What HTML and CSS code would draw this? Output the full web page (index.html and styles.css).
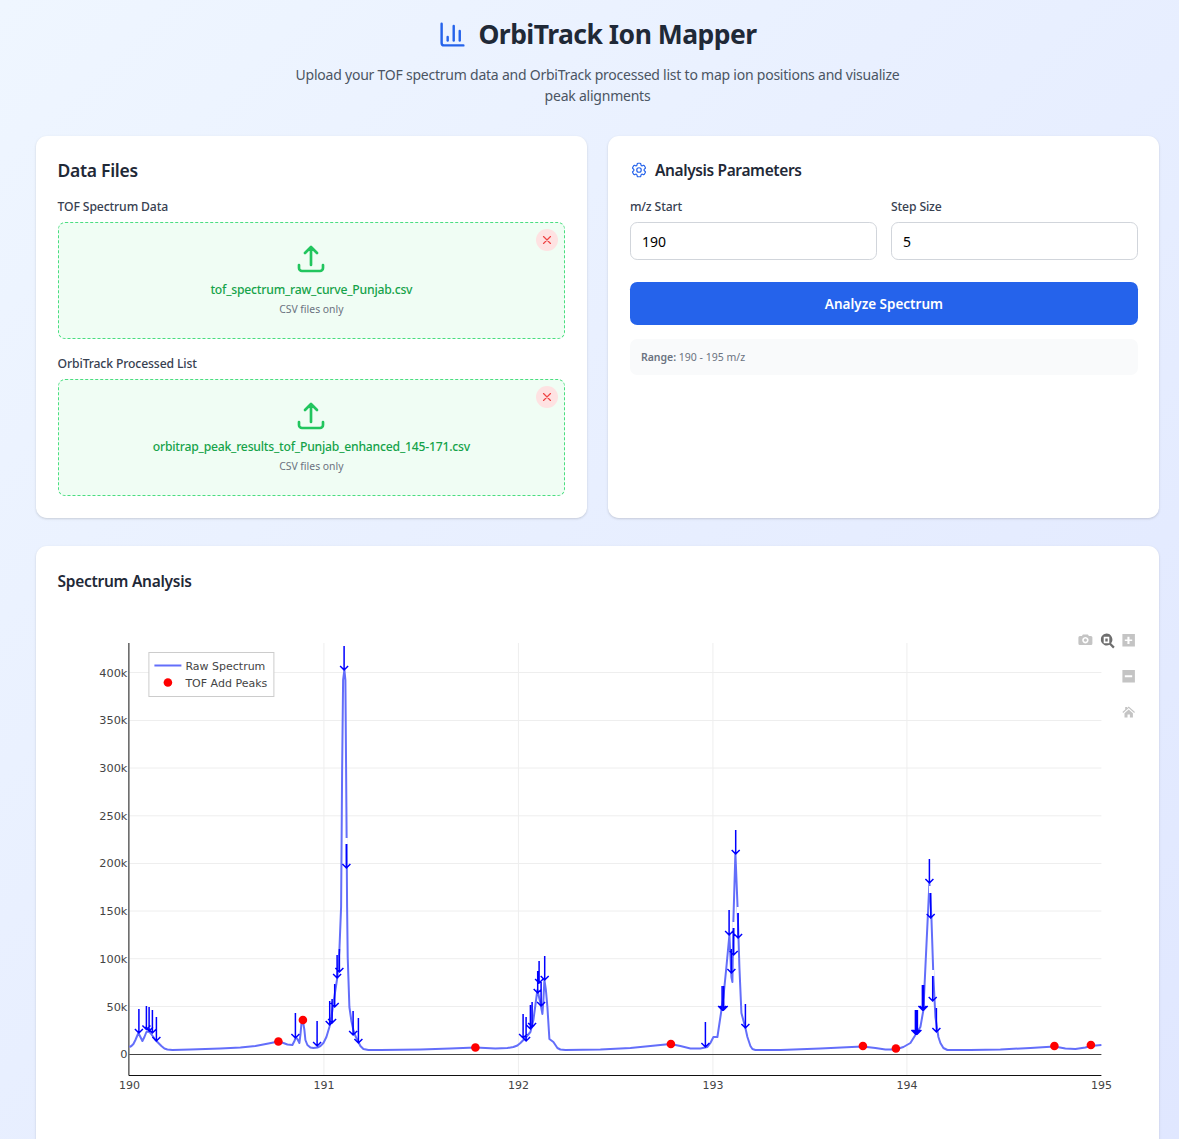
FILE: index.html
```html
<!DOCTYPE html>
<html lang="en">
<head>
<meta charset="utf-8">
<title>OrbiTrack Ion Mapper</title>
<link rel="stylesheet" href="styles.css">
</head>
<body>
<div class="page">
  <header class="header">
    <div class="title-row">
      <svg class="title-icon" viewBox="0 0 24 24"><path d="M3 3v16a2 2 0 0 0 2 2h16"/><path d="M18 17V9"/><path d="M13 17V5"/><path d="M8 17v-3"/></svg>
      <h1 class="title">OrbiTrack Ion Mapper</h1>
    </div>
    <p class="subtitle">Upload your TOF spectrum data and OrbiTrack processed list to map ion positions and visualize peak alignments</p>
  </header>

  <div class="columns">
    <section class="card">
      <h2 class="card-title card-title-files">Data Files</h2>
      <div class="field">
        <div class="label">TOF Spectrum Data</div>
        <div class="dropzone">
          <button class="remove" type="button"><svg viewBox="0 0 24 24"><path d="M6 6l12 12M18 6L6 18"/></svg></button>
          <svg class="upload" viewBox="0 0 24 24"><path d="M3 16.5v2.25A2.25 2.25 0 0 0 5.25 21h13.5A2.25 2.25 0 0 0 21 18.75V16.5m-13.5-9L12 3m0 0l4.5 4.5M12 3v13.5"/></svg>
          <div class="filename">tof_spectrum_raw_curve_Punjab.csv</div>
          <div class="hint">CSV files only</div>
        </div>
      </div>
      <div class="field">
        <div class="label">OrbiTrack Processed List</div>
        <div class="dropzone">
          <button class="remove" type="button"><svg viewBox="0 0 24 24"><path d="M6 6l12 12M18 6L6 18"/></svg></button>
          <svg class="upload" viewBox="0 0 24 24"><path d="M3 16.5v2.25A2.25 2.25 0 0 0 5.25 21h13.5A2.25 2.25 0 0 0 21 18.75V16.5m-13.5-9L12 3m0 0l4.5 4.5M12 3v13.5"/></svg>
          <div class="filename">orbitrap_peak_results_tof_Punjab_enhanced_145-171.csv</div>
          <div class="hint">CSV files only</div>
        </div>
      </div>
    </section>

    <section class="card card-params">
      <div class="params-head">
        <svg class="gear" viewBox="0 0 24 24"><path d="M9.594 3.94c.09-.542.56-.94 1.11-.94h2.593c.55 0 1.02.398 1.11.94l.213 1.281c.063.374.313.686.645.87.074.04.147.083.22.127.324.196.72.257 1.075.124l1.217-.456a1.125 1.125 0 0 1 1.37.49l1.296 2.247a1.125 1.125 0 0 1-.26 1.431l-1.003.827c-.293.24-.438.613-.431.992a6.759 6.759 0 0 1 0 .255c-.007.378.138.75.43.99l1.005.828c.424.35.534.954.26 1.43l-1.298 2.247a1.125 1.125 0 0 1-1.369.491l-1.217-.456c-.355-.133-.75-.072-1.076.124a6.57 6.57 0 0 1-.22.128c-.331.183-.581.495-.644.869l-.213 1.28c-.09.543-.56.941-1.11.941h-2.594c-.55 0-1.02-.398-1.11-.94l-.213-1.281c-.062-.374-.312-.686-.644-.87a6.52 6.52 0 0 1-.22-.127c-.325-.196-.72-.257-1.076-.124l-1.217.456a1.125 1.125 0 0 1-1.369-.49l-1.297-2.247a1.125 1.125 0 0 1 .26-1.431l1.004-.827c.292-.24.437-.613.43-.992a6.932 6.932 0 0 1 0-.255c.007-.378-.138-.75-.43-.99l-1.004-.828a1.125 1.125 0 0 1-.26-1.43l1.297-2.247a1.125 1.125 0 0 1 1.37-.491l1.216.456c.356.133.751.072 1.076-.124.072-.044.146-.087.22-.128.332-.183.582-.495.644-.869l.214-1.281z"/><path d="M15 12a3 3 0 1 1-6 0 3 3 0 0 1 6 0z"/></svg>
        <h2 class="card-title card-title-params">Analysis Parameters</h2>
      </div>
      <div class="inputs">
        <div>
          <div class="label">m/z Start</div>
          <input class="input" type="text" value="190">
        </div>
        <div>
          <div class="label">Step Size</div>
          <input class="input" type="text" value="5">
        </div>
      </div>
      <button class="analyze" type="button">Analyze Spectrum</button>
      <div class="range"><strong>Range:</strong> 190 - 195 m/z</div>
    </section>
  </div>

  <section class="card chart-card">
    <h2 class="card-title card-title-chart">Spectrum Analysis</h2>
    <svg class="chart" viewBox="57.6 612 1080 540">
      <g class="grid">
        <path d="M129 1006.5H1101M129 958.7H1101M129 911H1101M129 863.5H1101M129 815.8H1101M129 768H1101M129 720.5H1101M129 672.5H1101"/>
        <path d="M323.5 643V1075M518 643V1075M712.5 643V1075M906.5 643V1075"/>
      </g>
      <path class="zero" d="M129 1054.5H1101"/>
      <path class="axis" d="M128.5 643V1075.5H1101"/>
      <g class="ticks-y">
        <text x="127" y="677">400k</text>
        <text x="127" y="724">350k</text>
        <text x="127" y="772">300k</text>
        <text x="127" y="820">250k</text>
        <text x="127" y="867">200k</text>
        <text x="127" y="915">150k</text>
        <text x="127" y="963">100k</text>
        <text x="127" y="1011">50k</text>
        <text x="127" y="1058">0</text>
      </g>
      <g class="ticks-x">
        <text x="129" y="1089">190</text>
        <text x="323.5" y="1089">191</text>
        <text x="518" y="1089">192</text>
        <text x="712.5" y="1089">193</text>
        <text x="906.5" y="1089">194</text>
        <text x="1101" y="1089">195</text>
      </g>
      <polyline class="curve" points="129,1047 131,1046 133,1044 135,1040 138,1033 140,1037 142,1041 144,1037 146,1032 148,1031.5 150,1033 153,1037 155,1040 158,1043 161,1046 164,1048.5 167,1049.5 172,1050 190,1049.5 220,1048.5 240,1047.5 255,1046 268,1043.5 278,1041.5 283,1043 287,1044.5 292,1045 294,1041 295.5,1037.5 297,1039 299,1043 300,1035 301,1024 302.5,1021 304,1030 305,1040 307,1045 310,1047.5 313,1048 317,1047.5 320,1046 323,1043 326,1037 329,1027 331,1017 333,1003 335,990 337,977 339,950 340.7,907 341.7,773 342.7,680 344,670 345,680 346,807 346.7,907 347.3,957 349,1007 351,1021 353,1030 355,1036 357,1040 360,1046 363,1049 368,1050 380,1050 420,1049.5 450,1048.5 475,1047.5 495,1048.5 507,1048 513,1047 517,1045.5 520,1043 525,1038 530,1032 533,1020 535,1005 537,990 540,1003 542,1014 543,1000 544,980 545.5,990 547,1007 549,1039 551,1040.5 553,1042 555,1045 557,1048 560,1049.5 565,1050 600,1049.5 630,1048 650,1046 670,1044 680,1046 690,1048.5 700,1048.5 707,1047 710,1043 713,1037 717,1037 720,1017 723,997 726,967 729,935 731,977 732,982 733,920 735,853 737,903 739,967 741,1013 745,1028 747,1037 750,1046 752,1049 755,1050 780,1050 820,1048.5 862,1046.5 875,1048 885,1049.5 895,1049.5 903,1047 910,1043 915,1035 920,1027 923,1010 925,967 929,883 931,917 933,977 935,1017 938,1037 940,1043 943,1048 947,1050 970,1050 1000,1049.5 1030,1048 1054,1046.5 1065,1048.5 1075,1049 1085,1047.5 1090,1046 1101,1045"/>
      <path class="notches" d="M346 838V844M930 886V893M932.5 970V976M737.7 907V913M733.3 922V928"/>
      <path class="arrows" d="M138.5 1009V1033M134.5 1029L138.5 1033L142.5 1029M146 1006V1029.5M142 1025.5L146 1029.5L150 1025.5M148.7 1007V1031M144.7 1027L148.7 1031L152.7 1027M152 1010V1033M148 1029L152 1033L156 1029M156 1017V1041M152 1037L156 1041L160 1037M295 1013V1038M291 1034L295 1038L299 1034M316.7 1021V1046M312.7 1042L316.7 1046L320.7 1042M329.3 1001V1025M325.3 1021L329.3 1025L333.3 1021M331.7 999V1023M327.7 1019L331.7 1023L335.7 1019M334.3 984V1007M330.3 1003L334.3 1007L338.3 1003M336.7 955V978M332.7 974L336.7 978L340.7 974M339 949V972M335 968L339 972L343 968M343.7 646V670M339.7 666L343.7 670L347.7 666M346 844V868M342 864L346 868L350 864M352.7 1011V1035M348.7 1031L352.7 1035L356.7 1031M358 1018V1043M354 1039L358 1043L362 1039M522.7 1014V1038M518.7 1034L522.7 1038L526.7 1034M525.7 1017V1041M521.7 1037L525.7 1041L529.7 1037M530 1005V1029M526 1025L530 1029L534 1025M531.7 1002V1027M527.7 1023L531.7 1027L535.7 1023M537.3 971V993M533.3 989L537.3 993L541.3 989M538.7 961V983M534.7 979L538.7 983L542.7 979M540.7 982V1006M536.7 1002L540.7 1006L544.7 1002M544.3 956V980M540.3 976L544.3 980L548.3 976M705 1022V1047M701 1043L705 1047L709 1043M721.7 986V1010M717.7 1006L721.7 1010L725.7 1006M723.3 986V1010M719.3 1006L723.3 1010L727.3 1006M728.7 910V935M724.7 931L728.7 935L732.7 931M731 949V973M727 969L731 973L735 969M733.3 928V955M729.3 951L733.3 955L737.3 951M735.3 830V854M731.3 850L735.3 854L739.3 850M737.7 913V938M733.7 934L737.7 938L741.7 934M745 1004V1028M741 1024L745 1028L749 1024M915 1010V1034M911 1030L915 1034L919 1030M916 1010V1034M912 1030L916 1034L920 1030M917 1010V1034M913 1030L917 1034L921 1030M922 985V1010M918 1006L922 1010L926 1006M923.3 985V1010M919.3 1006L923.3 1010L927.3 1006M929 859V883M925 879L929 883L933 879M930.3 893V918M926.3 914L930.3 918L934.3 914M932.3 976V1001M928.3 997L932.3 1001L936.3 997M936 1008V1032M932 1028L936 1032L940 1028"/>
      <g class="peaks">
        <circle cx="278" cy="1041.5" r="4.3"/>
        <circle cx="302.5" cy="1020" r="4.3"/>
        <circle cx="475" cy="1047.5" r="4.3"/>
        <circle cx="670.5" cy="1044" r="4.3"/>
        <circle cx="862.5" cy="1046" r="4.3"/>
        <circle cx="895.5" cy="1048.5" r="4.3"/>
        <circle cx="1054" cy="1046" r="4.3"/>
        <circle cx="1090.5" cy="1045" r="4.3"/>
      </g>
      <g class="legend">
        <rect class="legend-box" x="148.5" y="652.5" width="125" height="44"/>
        <path class="legend-line" d="M154 665.5H181"/>
        <circle class="legend-dot" cx="167.5" cy="682.5" r="4.3"/>
        <text x="185" y="670">Raw Spectrum</text>
        <text x="185" y="687">TOF Add Peaks</text>
      </g>
      <g class="modebar">
        <path fill-rule="evenodd" d="M1078 637.5a1.5 1.5 0 0 1 1.5-1.5h2l1-1.5h5l1 1.5h2a1.5 1.5 0 0 1 1.5 1.5v6a1.5 1.5 0 0 1-1.5 1.5h-11a1.5 1.5 0 0 1-1.5-1.5zM1085 637a3.2 3.2 0 1 0 .01 0zM1085 638.6a1.6 1.6 0 1 1-.01 0z"/>
        <path class="modebar-active" fill-rule="evenodd" d="M1106 633.5a6 6 0 0 1 4.7 9.7l3.6 3.6-1.6 1.6-3.6-3.6a6 6 0 1 1-3.1-11.3zM1103.3 636.8v6.4h5.6v-6.4zM1104.9 638.4h2.4v3.2h-2.4z"/>
        <path fill-rule="evenodd" d="M1122 634h12.5v12.5H1122zM1127 636.7v2.8h-2.6v1.6h2.6v2.8h2.1v-2.8h2.7v-1.6h-2.7v-2.8z"/>
        <path fill-rule="evenodd" d="M1122 670h12.5v12.5H1122zM1124.4 675.3v2h7.4v-2z"/>
        <path d="M1128.3 706.5l6.3 5.6-.8.9-5.5-4.9-5.5 4.9-.8-.9 2.8-2.5V707h1.8v1zM1128.3 709.5l4.2 3.7v4.4h-3v-3.2h-2.4v3.2h-3v-4.4z"/>
      </g>
    </svg>
  </section>
</div>
</body>
</html>
```

FILE: styles.css
```css
* { box-sizing: border-box; }
html, body { margin: 0; height: 1139px; overflow: hidden; }
body {
  background: linear-gradient(135deg, #eff6ff 0%, #e0e7ff 100%);
  font-family: "Noto Sans", "Open Sans", sans-serif;
  color: #1f2937;
}
.page { padding: 0 20px 0 36px; }
.header { text-align: center; padding-top: 14px; }
.title-row { display: flex; justify-content: center; align-items: center; gap: 11px; height: 41px; }
.title-icon { width: 29px; height: 29px; fill: none; stroke: #2563eb; stroke-width: 2; stroke-linecap: round; stroke-linejoin: round; }
.title { margin: 0; font-size: 26.5px; letter-spacing: -0.52px; font-weight: 700; line-height: 39px; color: #1f2937; }
.subtitle { margin: 9px auto 0; max-width: 625px; font-size: 14px; letter-spacing: -0.23px; line-height: 21px; color: #4b5563; }
.columns { display: grid; grid-template-columns: 1fr 1fr; gap: 21.6px; margin-top: 30px; }
.card { background: #fff; border-radius: 10.8px; padding: 21.6px; box-shadow: 0 1px 3px rgba(0,0,0,.1), 0 1px 2px rgba(0,0,0,.06); }
.card-params { padding-right: 21px; }
.card-title { margin: 0; font-weight: 600; color: #1f2937; }
.card-title-files { font-size: 17.5px; letter-spacing: -0.3px; line-height: 24px; margin-bottom: 16px; }
.card-title-params { font-size: 15.5px; letter-spacing: -0.37px; line-height: 24px; }
.card-title-chart { font-size: 15.5px; letter-spacing: -0.28px; line-height: 29px; }
.field + .field { margin-top: 15.5px; }
.label { font-size: 12.2px; letter-spacing: -0.13px; line-height: 18px; font-weight: 500; color: #374151; margin-bottom: 6.5px; }
.dropzone { position: relative; height: 117px; padding-top: 19.5px; border: 1px dashed #4ade80; border-radius: 7.2px; background: #f0fdf4; text-align: center; }
.upload { display: block; width: 32px; height: 32px; margin: 0 auto; fill: none; stroke: #22c55e; stroke-width: 2; stroke-linecap: round; stroke-linejoin: round; }
.filename { margin-top: 5.5px; font-size: 12.2px; letter-spacing: -0.22px; line-height: 19px; font-weight: 500; color: #16a34a; }
.hint { font-size: 10.4px; line-height: 16px; color: #6b7280; margin-top: 1.5px; }
.remove { position: absolute; top: 6px; right: 6px; width: 22px; height: 22px; padding: 4px; border: 0; border-radius: 50%; background: #fee2e2; }
.remove svg { display: block; width: 14px; height: 14px; fill: none; stroke: #ef4444; stroke-width: 2; stroke-linecap: round; }
.params-head { display: flex; align-items: center; gap: 7px; margin-bottom: 16px; }
.gear { width: 18px; height: 18px; fill: none; stroke: #2563eb; stroke-width: 1.6; stroke-linecap: round; stroke-linejoin: round; }
.inputs { display: grid; grid-template-columns: 1fr 1fr; gap: 14px; }
.input { display: block; width: 100%; height: 38px; padding: 0 11px; border: 1px solid #d1d5db; border-radius: 7.2px; background: #fff; font: 14px "Noto Sans", "Open Sans", sans-serif; color: #000; }
.analyze { display: block; width: 100%; height: 43px; margin-top: 22px; border: 0; border-radius: 7.2px; background: #2563eb; color: #fff; font: 600 13.5px "Noto Sans", "Open Sans", sans-serif; }
.range { margin-top: 14px; height: 36px; padding: 0 11px; border-radius: 7.2px; background: #f9fafb; font-size: 10.5px; line-height: 36px; color: #6b7280; }
.range strong { font-weight: 600; }
.chart-card { margin-top: 28px; height: 640px; }
.chart { display: block; width: 1080px; height: 540px; margin-top: 16px; overflow: visible; }
.grid path { fill: none; stroke: #eee; stroke-width: 1; }
.zero { fill: none; stroke: #444; stroke-width: 1; }
.axis { fill: none; stroke: #111; stroke-width: 1; }
.chart text { font-family: "DejaVu Sans", Verdana, sans-serif; font-size: 11px; fill: #444; }
.ticks-y text { text-anchor: end; font-size: 11.3px; }
.ticks-x text { text-anchor: middle; }
.curve { fill: none; stroke: #636efa; stroke-width: 2; stroke-linejoin: round; }
.notches { fill: none; stroke: #fff; stroke-width: 3; }
.arrows { fill: none; stroke: #0000ff; stroke-width: 1.5; }
.peaks circle, .legend-dot { fill: #ff0000; }
.legend-box { fill: #fff; stroke: #ccc; stroke-width: 1; }
.legend-line { fill: none; stroke: #636efa; stroke-width: 2; }
.modebar path { fill: #c4c4c4; }
.modebar .modebar-active { fill: #6e6e6e; }
```
